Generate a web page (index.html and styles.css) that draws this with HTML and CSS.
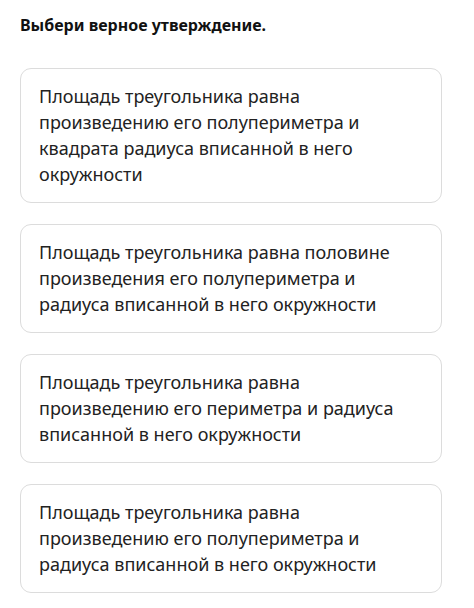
FILE: index.html
```html
<!DOCTYPE html>
<html lang="ru">
<head>
<meta charset="utf-8">
<title>Выбери верное утверждение</title>
<link rel="stylesheet" href="styles.css">
</head>
<body>
<main class="quiz">
  <h1 class="quiz__title">Выбери верное утверждение.</h1>
  <ul class="quiz__options">
    <li class="option">Площадь треугольника равна произведению его полупериметра и квадрата радиуса вписанной в него окружности</li>
    <li class="option">Площадь треугольника равна половине произведения его полупериметра и радиуса вписанной в него окружности</li>
    <li class="option">Площадь треугольника равна произведению его периметра и радиуса вписанной в него окружности</li>
    <li class="option">Площадь треугольника равна произведению его полупериметра и радиуса вписанной в него окружности</li>
  </ul>
</main>
</body>
</html>
```

FILE: styles.css
```css
html, body {
  margin: 0;
  padding: 0;
  background: #ffffff;
}

body {
  font-family: "Noto Sans", "Open Sans", sans-serif;
  color: #1f1f1f;
}

.quiz {
  padding: 14px 32px 0 20px;
}

.quiz__title {
  margin: 0;
  font-size: 16px;
  line-height: 22px;
  font-weight: 700;
  color: #111;
}

.quiz__options {
  list-style: none;
  margin: 32px 0 0;
  padding: 0;
  display: flex;
  flex-direction: column;
  gap: 21px;
}

.option {
  border: 1.5px solid #dcdcdc;
  border-radius: 11px;
  padding: 14px 40px 15px 18px;
  font-size: 18px;
  line-height: 26px;
  color: #222;
}
```
